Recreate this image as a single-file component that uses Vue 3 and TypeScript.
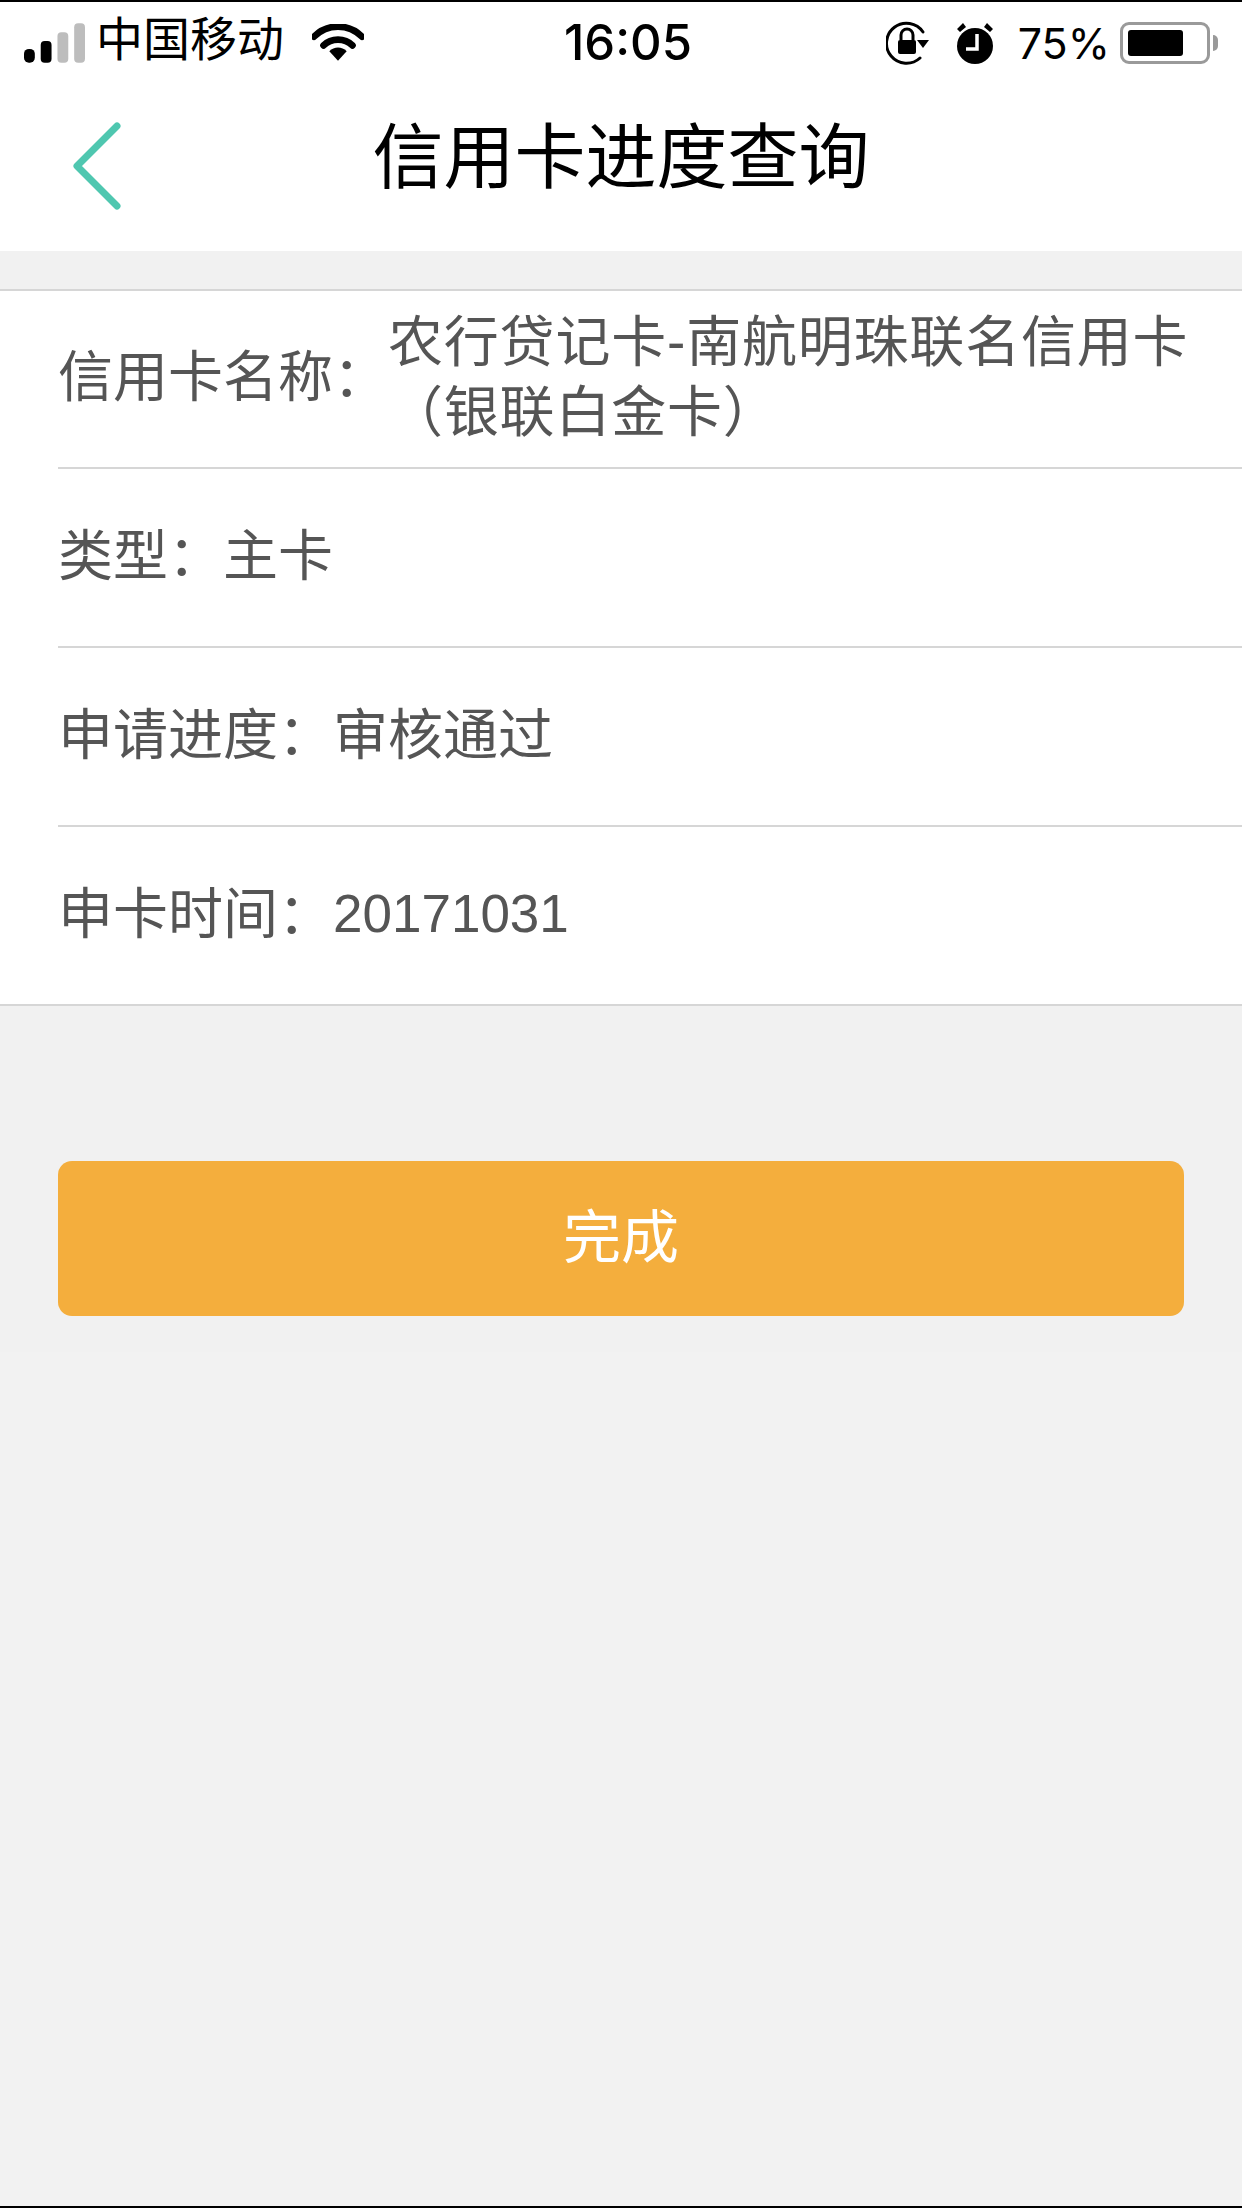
<template>
  <div class="phone">
    <div class="status-bar">
      <div class="status-left">
        <svg class="signal" width="61" height="40" viewBox="0 0 62 40">
          <rect x="0" y="26" width="11" height="14" rx="5" fill="#000" />
          <rect x="17" y="18" width="11" height="22" rx="4" fill="#000" />
          <rect x="34" y="9" width="11" height="31" rx="4" fill="#bdbdbd" />
          <rect x="51" y="0" width="11" height="40" rx="4" fill="#bdbdbd" />
        </svg>
        <span class="carrier">中国移动</span>
        <svg class="wifi" width="52" height="37" viewBox="0 0 54 38">
          <path d="M2 13 C16 -1 38 -1 52 13" fill="none" stroke="#000" stroke-width="7" stroke-linecap="round" />
          <path d="M12 22 C20 14 34 14 42 22" fill="none" stroke="#000" stroke-width="7" stroke-linecap="round" />
          <path d="M18 28 C23 23 31 23 36 28 L27 38 Z" fill="#000" />
        </svg>
      </div>
      <div class="time">16:05</div>
      <div class="status-right">
        <svg class="lock" width="44" height="46" viewBox="0 0 44 46">
          <path d="M37 12 A20 20 0 1 0 34 38" fill="none" stroke="#000" stroke-width="3" stroke-linecap="round" />
          <path d="M31 20 L43 20 L37 28 Z" fill="#000" />
          <rect x="12" y="20" width="18" height="14" rx="2" fill="#000" />
          <path d="M15 20 V15 A6 6 0 0 1 27 15 V20" fill="none" stroke="#000" stroke-width="3" />
        </svg>
        <svg class="alarm" width="38" height="44" viewBox="0 0 38 44">
          <circle cx="19" cy="25" r="18" fill="#000" />
          <path d="M1 8 L7 2 L10 6 L4 11 Z M37 8 L31 2 L28 6 L34 11 Z" fill="#000" />
          <path d="M21 13 V28 H10" fill="none" stroke="#fff" stroke-width="3.5" />
        </svg>
        <span class="percent">75%</span>
        <div class="battery">
          <div class="battery-level"></div>
        </div>
        <div class="battery-nub"></div>
      </div>
    </div>

    <div class="nav-bar">
      <svg class="back-icon" width="52" height="90" viewBox="0 0 52 90">
        <path d="M46 5 L6 45 L46 85" fill="none" stroke="#4fc7b0" stroke-width="7" stroke-linecap="round" stroke-linejoin="round" />
      </svg>
      <div class="nav-title">信用卡进度查询</div>
    </div>

    <div class="content">
      <div class="info-list">
        <div v-for="(row, i) in rows" :key="row.label" class="info-row" :class="{ first: i === 0 }">
          <span class="info-label">{{ row.label }}</span>
          <span class="info-value">{{ row.value }}</span>
        </div>
      </div>
      <div class="action">
        <button class="done-button">完成</button>
      </div>
    </div>
  </div>
</template>

<script setup lang="ts">
interface InfoRow {
  label: string
  value: string
}

const rows: InfoRow[] = [
  { label: '信用卡名称：', value: '农行贷记卡-南航明珠联名信用卡（银联白金卡）' },
  { label: '类型：', value: '主卡' },
  { label: '申请进度：', value: '审核通过' },
  { label: '申卡时间：', value: '20171031' }
]
</script>

<style>
html,
body {
  margin: 0;
  background: #f2f2f2;
}
</style>

<style scoped>
.phone {
  width: 1242px;
  height: 2208px;
  box-sizing: border-box;
  display: flex;
  flex-direction: column;
  background: #f2f2f2;
  border-top: 2px solid #000;
  border-bottom: 2px solid #000;
  font-family: "Liberation Sans", "Noto Sans CJK SC", sans-serif;
  overflow: hidden;
}

.status-bar {
  height: 89px;
  background: #fff;
  display: flex;
  align-items: center;
  justify-content: space-between;
  padding: 0 24px 8px 24px;
  box-sizing: border-box;
  color: #000;
}

.status-left {
  width: 420px;
  display: flex;
  align-items: center;
}

.signal {
  margin-right: 15px;
}

.carrier {
  font-size: 47px;
  line-height: 60px;
  margin-left: -4px;
  margin-top: -6px;
}

.wifi {
  margin-left: 28px;
}

.time {
  font-family: "Inter", "Liberation Sans", sans-serif;
  font-size: 49px;
  font-weight: 500;
  margin-right: 68px;
}

.status-right {
  width: 338px;
  display: flex;
  align-items: center;
  justify-content: flex-end;
}

.alarm {
  margin-left: 26px;
}

.percent {
  font-family: "Inter", "Liberation Sans", sans-serif;
  font-size: 43px;
  margin-left: 24px;
  margin-right: 10px;
}

.battery {
  width: 90px;
  height: 42px;
  box-sizing: border-box;
  border: 3px solid #9a9a9a;
  border-radius: 9px;
  padding: 5px;
}

.battery-level {
  width: 75%;
  height: 100%;
  background: #000;
  border-radius: 3px;
}

.battery-nub {
  width: 5px;
  height: 16px;
  margin-left: 3px;
  background: #9a9a9a;
  border-radius: 0 5px 5px 0;
}

.nav-bar {
  position: relative;
  height: 160px;
  background: #fff;
  display: flex;
  align-items: center;
  justify-content: center;
}

.back-icon {
  position: absolute;
  left: 71px;
  top: 30px;
}

.nav-title {
  font-size: 71px;
  line-height: 100px;
  color: #000;
  margin-top: -26px;
}

.content {
  flex: none;
  height: 1101px;
  background: #f1f1f1;
  padding-top: 38px;
  box-sizing: border-box;
}

.info-list {
  background: #fff;
  border-top: 2px solid #d6d6d6;
  border-bottom: 2px solid #d6d6d6;
  padding-left: 58px;
}

.info-row {
  height: 179px;
  box-sizing: border-box;
  display: flex;
  align-items: center;
  border-top: 2px solid #d6d6d6;
  padding-bottom: 4px;
  color: #555;
  font-size: 55px;
  line-height: 70px;
}

.info-row.first {
  height: 176px;
  border-top: none;
}

.info-row:last-child .info-value {
  font-size: 53px;
}

.info-label {
  flex: none;
}

.info-value {
  flex: 1;
  padding-right: 48px;
}

.info-row.first .info-value {
  letter-spacing: 0.8px;
}

.action {
  padding: 155px 58px 0;
}

.done-button {
  display: block;
  width: 100%;
  height: 155px;
  border: none;
  border-radius: 14px;
  padding: 0 0 12px;
  background: #f4ae3d;
  color: #fff;
  font-family: inherit;
  font-size: 58px;
}
</style>
